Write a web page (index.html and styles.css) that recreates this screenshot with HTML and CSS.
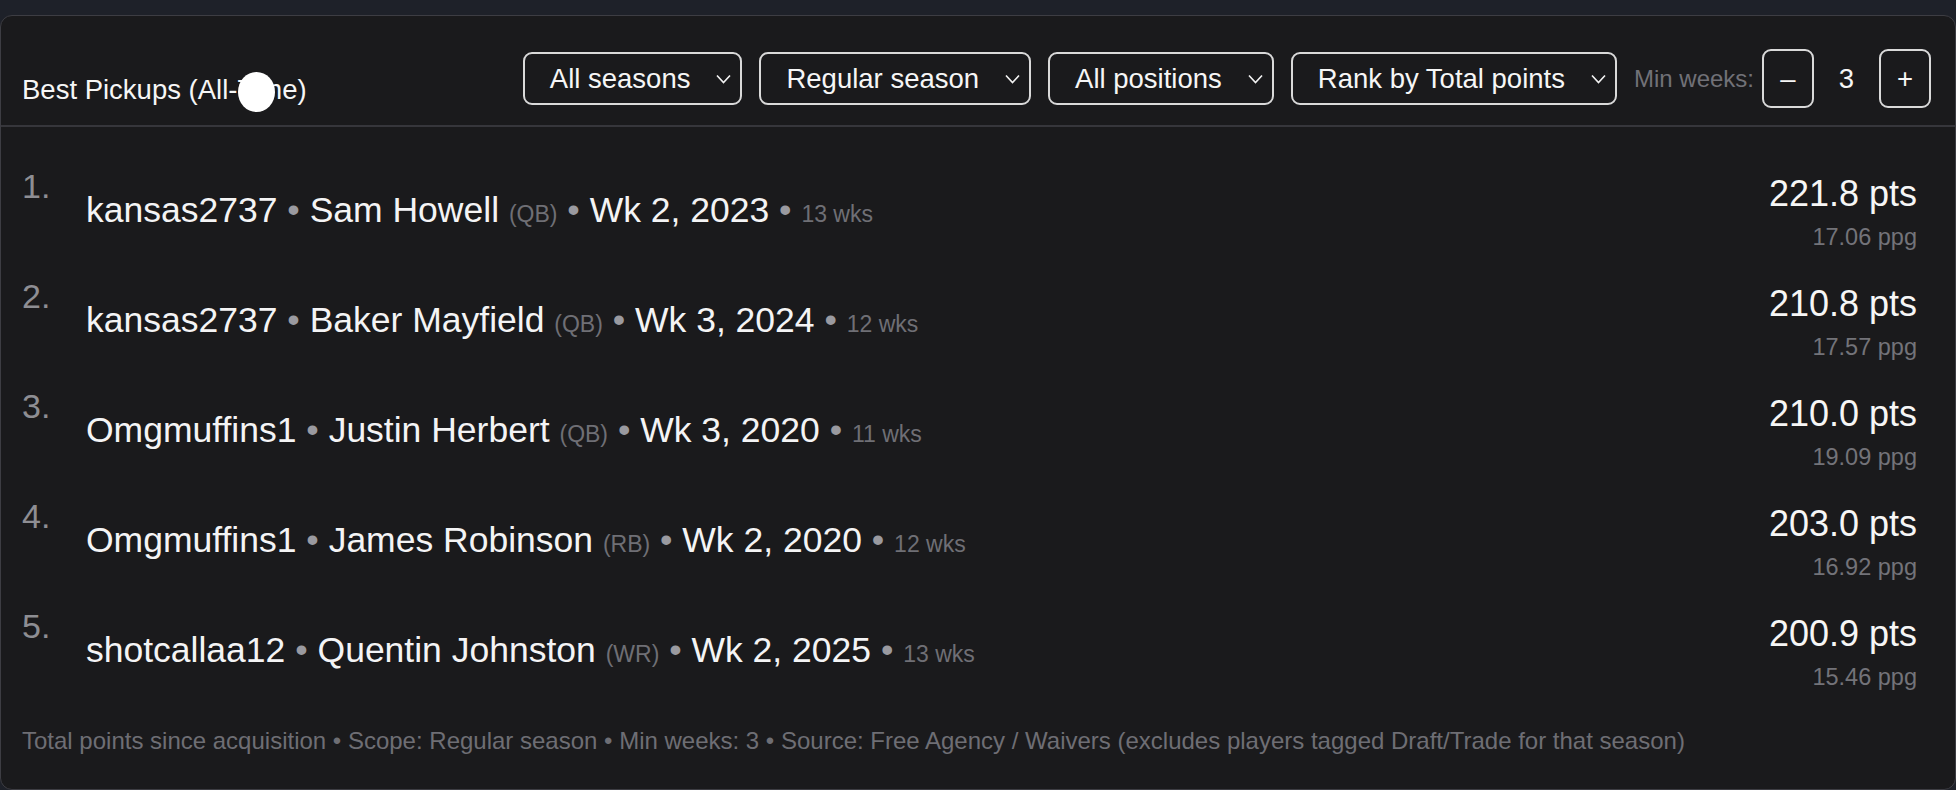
FILE: index.html
```html
<!DOCTYPE html>
<html lang="en">
<head>
<meta charset="utf-8">
<title>Best Pickups</title>
<link rel="stylesheet" href="styles.css">
</head>
<body>
<div class="page">
  <section class="card">
    <header class="card-head">
      <h2 class="title">Best Pickups (All-Time)<span class="cursor-dot"></span></h2>
      <div class="controls">
        <div class="select"><span>All seasons</span><svg class="chev" width="15" height="10" viewBox="0 0 15 10"><path d="M1 1.5 L7.5 8.5 L14 1.5" fill="none" stroke="#f2f2f2" stroke-width="1.6"/></svg></div>
        <div class="select"><span>Regular season</span><svg class="chev" width="15" height="10" viewBox="0 0 15 10"><path d="M1 1.5 L7.5 8.5 L14 1.5" fill="none" stroke="#f2f2f2" stroke-width="1.6"/></svg></div>
        <div class="select"><span>All positions</span><svg class="chev" width="15" height="10" viewBox="0 0 15 10"><path d="M1 1.5 L7.5 8.5 L14 1.5" fill="none" stroke="#f2f2f2" stroke-width="1.6"/></svg></div>
        <div class="select"><span>Rank by Total points</span><svg class="chev" width="15" height="10" viewBox="0 0 15 10"><path d="M1 1.5 L7.5 8.5 L14 1.5" fill="none" stroke="#f2f2f2" stroke-width="1.6"/></svg></div>
        <div class="stepper">
          <span class="step-label">Min weeks:</span>
          <button class="step-btn" type="button">–</button>
          <span class="step-val">3</span>
          <button class="step-btn" type="button">+</button>
        </div>
      </div>
    </header>
    <ol class="list">
      <li class="row">
        <span class="rank">1.</span>
        <div class="desc">kansas2737 <span class="dot">•</span> Sam Howell <span class="sm">(QB)</span> <span class="dot">•</span> Wk 2, 2023 <span class="dot">•</span> <span class="sm">13 wks</span></div>
        <div class="score"><div class="pts">221.8 pts</div><div class="ppg">17.06 ppg</div></div>
      </li>
      <li class="row">
        <span class="rank">2.</span>
        <div class="desc">kansas2737 <span class="dot">•</span> Baker Mayfield <span class="sm">(QB)</span> <span class="dot">•</span> Wk 3, 2024 <span class="dot">•</span> <span class="sm">12 wks</span></div>
        <div class="score"><div class="pts">210.8 pts</div><div class="ppg">17.57 ppg</div></div>
      </li>
      <li class="row">
        <span class="rank">3.</span>
        <div class="desc">Omgmuffins1 <span class="dot">•</span> Justin Herbert <span class="sm">(QB)</span> <span class="dot">•</span> Wk 3, 2020 <span class="dot">•</span> <span class="sm">11 wks</span></div>
        <div class="score"><div class="pts">210.0 pts</div><div class="ppg">19.09 ppg</div></div>
      </li>
      <li class="row">
        <span class="rank">4.</span>
        <div class="desc">Omgmuffins1 <span class="dot">•</span> James Robinson <span class="sm">(RB)</span> <span class="dot">•</span> Wk 2, 2020 <span class="dot">•</span> <span class="sm">12 wks</span></div>
        <div class="score"><div class="pts">203.0 pts</div><div class="ppg">16.92 ppg</div></div>
      </li>
      <li class="row">
        <span class="rank">5.</span>
        <div class="desc">shotcallaa12 <span class="dot">•</span> Quentin Johnston <span class="sm">(WR)</span> <span class="dot">•</span> Wk 2, 2025 <span class="dot">•</span> <span class="sm">13 wks</span></div>
        <div class="score"><div class="pts">200.9 pts</div><div class="ppg">15.46 ppg</div></div>
      </li>
    </ol>
    <p class="foot">Total points since acquisition • Scope: Regular season • Min weeks: 3 • Source: Free Agency / Waivers (excludes players tagged Draft/Trade for that season)</p>
  </section>
</div>
</body>
</html>
```
FILE: styles.css
```css
html, body {
  margin: 0;
  padding: 0;
}

body {
  background: #1e2129;
  font-family: "Liberation Sans", Arial, sans-serif;
  color: #f4f4f5;
}

.page {
  padding-top: 15px;
}

.card {
  background: #1a1a1c;
  border: 1px solid #3d3d43;
  border-radius: 12px;
  overflow: hidden;
}

.card-head {
  display: flex;
  align-items: center;
  justify-content: space-between;
  padding: 33px 24px 17px 21px;
  border-bottom: 2px solid #36363b;
}

.title {
  position: relative;
  margin: 22px 0 0;
  font-size: 27.5px;
  line-height: 31px;
  font-weight: normal;
  color: #f6f6f6;
  white-space: nowrap;
}

.cursor-dot {
  position: absolute;
  left: 216px;
  top: -2px;
  width: 37px;
  height: 40px;
  border-radius: 50%;
  background: #ffffff;
}

.controls {
  display: flex;
  align-items: center;
  gap: 17px;
}

.select {
  display: flex;
  align-items: center;
  gap: 26px;
  box-sizing: border-box;
  height: 53px;
  padding: 0 9px 0 25px;
  border: 2px solid #d9d9d9;
  border-radius: 9px;
  font-size: 27.5px;
  line-height: 31px;
  color: #f6f6f6;
  white-space: nowrap;
}

.chev {
  display: block;
  flex: none;
}

.stepper {
  display: flex;
  align-items: center;
  gap: 8px;
}

.step-label {
  font-size: 24px;
  line-height: 28px;
  color: #717177;
  white-space: nowrap;
}

.step-btn {
  box-sizing: border-box;
  width: 52px;
  height: 59px;
  padding: 0;
  border: 2px solid #d9d9d9;
  border-radius: 9px;
  background: transparent;
  color: #f6f6f6;
  font-family: "Liberation Sans", Arial, sans-serif;
  font-size: 27.5px;
  line-height: 31px;
}

.step-val {
  min-width: 49px;
  text-align: center;
  font-size: 27.5px;
  line-height: 31px;
  color: #f6f6f6;
}

.list {
  list-style: none;
  margin: 0;
  padding: 39px 38px 0 21px;
}

.row {
  display: flex;
  align-items: flex-start;
  padding-bottom: 25px;
}

.rank {
  flex: none;
  width: 64px;
  font-size: 34px;
  line-height: 40px;
  color: #8e8e93;
}

.desc {
  flex: 1;
  margin-top: 24px;
  font-size: 35.5px;
  line-height: 40px;
  color: #f4f4f5;
  white-space: nowrap;
}

.dot {
  color: #9a9aa0;
}

.sm {
  font-size: 23px;
  color: #6f6f75;
}

.score {
  flex: none;
  margin-top: 8px;
  text-align: right;
}

.pts {
  font-size: 36px;
  line-height: 40px;
  color: #f6f6f6;
}

.ppg {
  margin-top: 9px;
  font-size: 23.5px;
  line-height: 28px;
  color: #737379;
}

.foot {
  margin: 11px 0 0;
  padding: 0 21px 34px;
  font-size: 24px;
  line-height: 28px;
  color: #6e6e74;
  white-space: nowrap;
}
```
